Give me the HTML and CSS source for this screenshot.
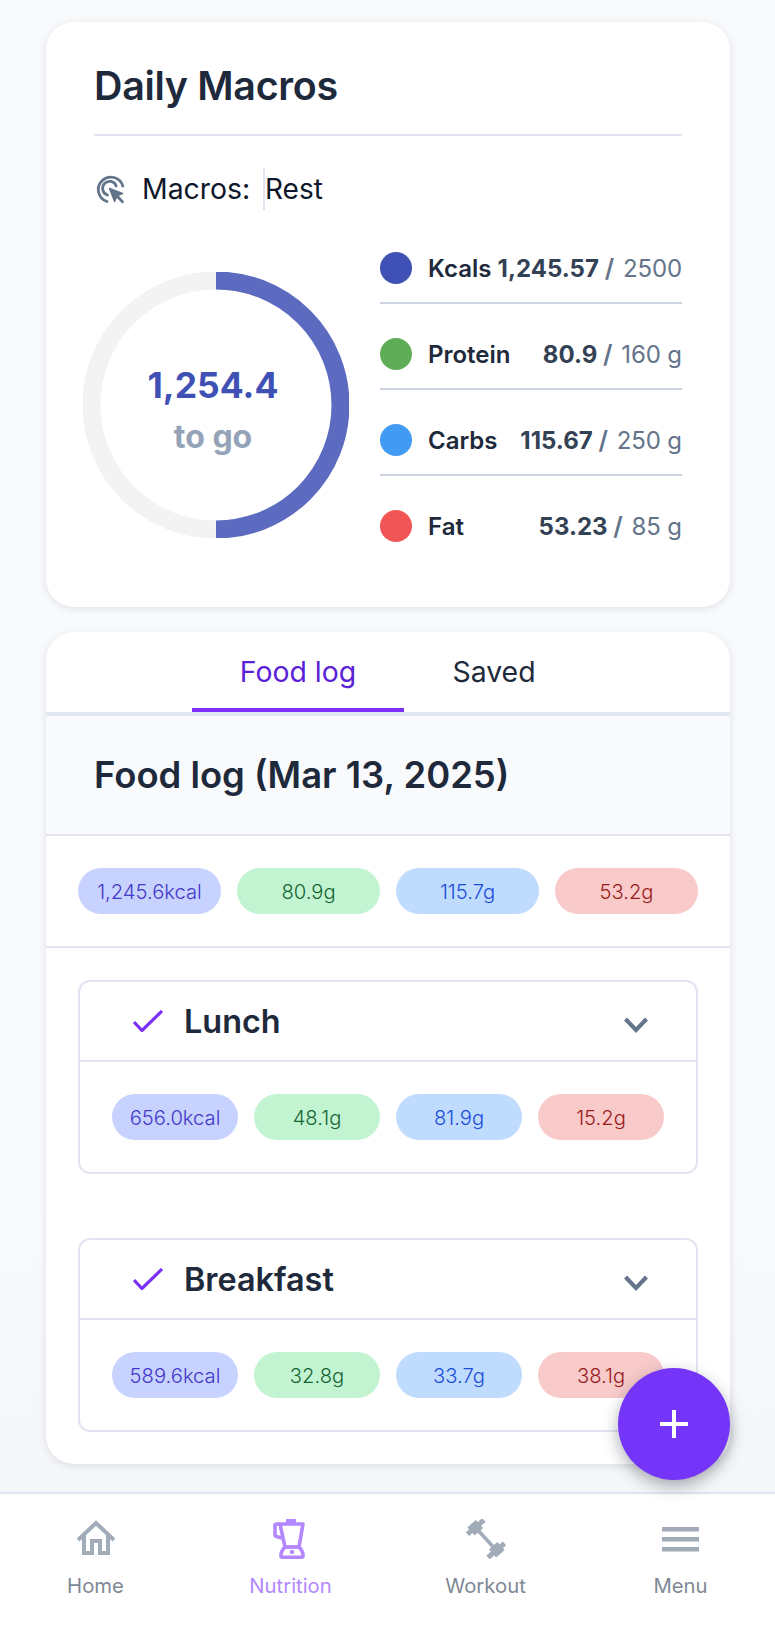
FILE: index.html
```html
<!DOCTYPE html>
<html lang="en">
<head>
<meta charset="utf-8">
<title>Daily Macros</title>
<link rel="stylesheet" href="styles.css">
</head>
<body>
<div class="page">
  <main class="content">
    <section class="card macros-card">
      <h1 class="card-title">Daily Macros</h1>
      <div class="macro-picker">
        <svg class="picker-icon" viewBox="0 0 29 29" fill="none" stroke="#64748b" stroke-width="2.800" stroke-linecap="round" stroke-linejoin="round"><path d="M11 26.500A12.500 12.500 0 1 1 26.800 11"/><path d="M11.500 20A7 7 0 1 1 20.200 11"/><path d="M13.500 13.500l13 5-5.600 2.200-2.200 5.800z" fill="#64748b" stroke-width="1.500"/><path d="M21 21l5.500 5.800"/></svg>
        <span class="picker-label">Macros:</span>
        <span class="picker-value">Rest</span>
      </div>
      <div class="macro-body">
        <div class="ring">
          <svg viewBox="0 0 266 266" class="ring-svg">
            <circle cx="133" cy="133" r="124.500" fill="none" stroke="#f3f3f3" stroke-width="18"/>
            <path d="M133 8.500A124.500 124.500 0 0 1 133 257.500" fill="none" stroke="#5c6bc0" stroke-width="18"/>
          </svg>
          <div class="ring-text">
            <div class="ring-value">1,254.4</div>
            <div class="ring-sub">to go</div>
          </div>
        </div>
        <ul class="legend">
          <li class="legend-row"><span class="dot dot-kcal"></span><span class="legend-name">Kcals</span><span class="legend-nums"><b>1,245.57</b> <i>/</i> <em>2500</em></span></li>
          <li class="legend-row"><span class="dot dot-protein"></span><span class="legend-name">Protein</span><span class="legend-nums"><b>80.9</b> <i>/</i> <em>160 g</em></span></li>
          <li class="legend-row"><span class="dot dot-carbs"></span><span class="legend-name">Carbs</span><span class="legend-nums"><b>115.67</b> <i>/</i> <em>250 g</em></span></li>
          <li class="legend-row"><span class="dot dot-fat"></span><span class="legend-name">Fat</span><span class="legend-nums"><b>53.23</b> <i>/</i> <em>85 g</em></span></li>
        </ul>
      </div>
    </section>

    <section class="card log-card">
      <nav class="tabs">
        <a class="tab tab-active">Food log</a>
        <a class="tab tab-saved">Saved</a>
      </nav>
      <header class="log-header"><h2 class="log-title">Food log (Mar 13, 2025)</h2></header>
      <div class="totals">
        <span class="pill pill-kcal">1,245.6kcal</span>
        <span class="pill pill-protein">80.9g</span>
        <span class="pill pill-carbs">115.7g</span>
        <span class="pill pill-fat">53.2g</span>
      </div>
      <div class="meals">
        <article class="meal">
          <div class="meal-head">
            <svg class="check" viewBox="0 0 30 22" fill="none" stroke="#7b2ff7" stroke-width="3.200"><path d="M1 12l8 8.500L29 1"/></svg>
            <span class="meal-name">Lunch</span>
            <svg class="chevron" viewBox="0 0 24 16" fill="none" stroke="#64748b" stroke-width="4"><path d="M1.500 2l10.500 11 10.500-11"/></svg>
          </div>
          <div class="meal-pills">
            <span class="pill pill-kcal">656.0kcal</span>
            <span class="pill pill-protein">48.1g</span>
            <span class="pill pill-carbs">81.9g</span>
            <span class="pill pill-fat">15.2g</span>
          </div>
        </article>
        <article class="meal">
          <div class="meal-head">
            <svg class="check" viewBox="0 0 30 22" fill="none" stroke="#7b2ff7" stroke-width="3.200"><path d="M1 12l8 8.500L29 1"/></svg>
            <span class="meal-name">Breakfast</span>
            <svg class="chevron" viewBox="0 0 24 16" fill="none" stroke="#64748b" stroke-width="4"><path d="M1.500 2l10.500 11 10.500-11"/></svg>
          </div>
          <div class="meal-pills">
            <span class="pill pill-kcal">589.6kcal</span>
            <span class="pill pill-protein">32.8g</span>
            <span class="pill pill-carbs">33.7g</span>
            <span class="pill pill-fat">38.1g</span>
          </div>
        </article>
      </div>
    </section>
  </main>

  <button class="fab" type="button"><svg viewBox="0 0 30 30" class="fab-plus" fill="none" stroke="#fff" stroke-width="4"><path d="M15 1v28M1 15h28"/></svg></button>

  <nav class="bottom-nav">
    <a class="nav-item">
      <svg class="nav-icon" viewBox="0 0 40 40" fill="none" stroke="#a2acb9" stroke-width="4"><path d="M2 21L20 4l18 17"/><path d="M8 16V34h8V22h8V34h8V16"/></svg>
      <span>Home</span>
    </a>
    <a class="nav-item nav-active">
      <svg class="nav-icon" viewBox="0 0 40 40" fill="none" stroke="#b388ff" stroke-width="3.600" stroke-linejoin="round"><path d="M9 5H32L28 28H14Z"/><path d="M9 5H5.500a1.500 1.500 0 0 0-1.500 1.500v9a2 2 0 0 0 1.500 2l5 1.500"/><rect x="15" y="0" width="10" height="4" fill="#b388ff" stroke="none"/><path d="M14 28H28Q32 32 32 36V37Q32 38.200 30.500 38.200H11.500Q10 38.200 10 37V36Q10 32 14 28Z"/><circle cx="21" cy="33" r="2.200" fill="#b388ff" stroke="none"/></svg>
      <span>Nutrition</span>
    </a>
    <a class="nav-item">
      <svg class="nav-icon" viewBox="0 0 40 40" fill="none" stroke="#a2acb9"><path d="M9 8L31 32" stroke-width="3.600"/><path d="M1.500 15L18 1" stroke-width="5"/><path d="M5 12.500L13.500 5" stroke-width="11"/><path d="M22 38.500L38.500 24.500" stroke-width="5"/><path d="M26.500 34.500L35 27" stroke-width="11"/></svg>
      <span>Workout</span>
    </a>
    <a class="nav-item">
      <svg class="nav-icon" viewBox="0 0 40 40" fill="#a2acb9"><rect x="1" y="8" width="37" height="4.500"/><rect x="1" y="18" width="37" height="4.500"/><rect x="1" y="28" width="37" height="4.500"/></svg>
      <span>Menu</span>
    </a>
  </nav>
</div>
</body>
</html>
```
FILE: styles.css
```css
* { box-sizing: border-box; }
html, body { margin: 0; padding: 0; }
body { font-family: "Inter", "Liberation Sans", sans-serif; color: #1e293b; background: #f8fafc; }
.page { position: relative; width: 775px; height: 1638px; display: flex; flex-direction: column; overflow: hidden; background: #f8fafc; }
.content { flex: 1; padding: 22px 45px 0 46px; display: flex; flex-direction: column; gap: 25px; background: linear-gradient(#f8fafc 80%, #f5f6f8); }
.card { background: #fff; border-radius: 28px; box-shadow: 0 2px 8px rgba(15, 23, 42, .1); }

.macros-card { height: 585px; padding: 0 48px 0 34px; }
.card-title { margin: 0 0 0 14px; height: 114px; border-bottom: 2px solid #e2e5f1; font-size: 39.400px; font-weight: 600; line-height: 40px; padding-top: 44px; letter-spacing: -.3px; color: #1e293b; }
.macro-picker { margin: 32px 0 0 14px; height: 42px; display: flex; align-items: center; }
.picker-icon { width: 29px; height: 29px; flex: none; margin-left: 2px; }
.picker-label { margin-left: 17px; font-size: 28.400px; color: #0f172a; width: 121px; padding-bottom: 2px; }
.picker-value { border-left: 2px solid #e2e5f1; height: 42px; line-height: 42px; font-size: 28px; color: #0f172a; }
.macro-body { display: flex; margin-top: 8px; }
.ring { position: relative; width: 266px; height: 266px; margin: 54px 31px 0 3px; flex: none; }
.ring-svg { width: 266px; height: 266px; display: block; }
.ring-text { position: absolute; inset: 0; display: flex; flex-direction: column; align-items: center; justify-content: center; padding: 12px 6px 0 0; }
.ring-value { font-size: 35.500px; font-weight: 700; line-height: 44px; color: #3f51b5; }
.ring-sub { font-size: 32px; font-weight: 700; line-height: 44px; margin-top: 7px; color: #94a3b8; }
.legend { list-style: none; margin: 0; padding: 0; flex: 1; }
.legend-row { height: 86px; display: flex; align-items: center; padding-top: 16px; border-bottom: 2px solid #cbd5e1; font-size: 24px; }
.legend-row:last-child { border-bottom: 0; padding-bottom: 2px; }
.dot { width: 32px; height: 32px; border-radius: 50%; flex: none; margin-right: 16px; }
.dot-kcal { background: #3f51b5; }
.dot-protein { background: #5fad56; }
.dot-carbs { background: #429bf3; }
.dot-fat { background: #f25555; }
.legend-name { font-weight: 600; color: #1e293b; }
.legend-nums { margin-left: auto; white-space: nowrap; }
.legend-nums b { font-weight: 700; color: #334155; }
.legend-nums i { font-style: normal; font-weight: 600; font-size: 25px; color: #64748b; margin: 0 2px 0 -1px; }
.legend-nums em { font-style: normal; color: #64748b; letter-spacing: -.1px; }

.log-card { height: 832px; overflow: hidden; }
.tabs { height: 84px; display: flex; justify-content: center; border-bottom: 4px solid #e2e8f0; }
.tab { width: 212px; height: 80px; font-size: 28.400px; line-height: 80px; text-align: center; color: #1e293b; }
.tab-active { color: #5b21d6; border-bottom: 4px solid #7b2ff7; }
.tab-saved { width: 180px; }
.log-header { height: 120px; background: #f8fafc; border-bottom: 2px solid #e2e5f1; padding-left: 48px; }
.log-title { margin: 0; font-size: 36.400px; font-weight: 600; line-height: 118px; color: #1e293b; }
.totals { height: 112px; padding: 32px 32px; display: flex; gap: 16px; border-bottom: 2px solid #e2e5f1; }
.pill { flex: 1 1 0; height: 46px; border-radius: 23px; display: flex; align-items: center; justify-content: center; font-size: 20.200px; font-weight: 300; }
.pill-kcal { background: #c7d2fe; color: #4338ca; }
.pill-protein { background: #c3f4d2; color: #166534; }
.pill-carbs { background: #bfdbfe; color: #1d4ed8; }
.pill-fat { background: #f8caca; color: #991b1b; }
.meals { padding: 32px 32px 0; display: flex; flex-direction: column; gap: 64px; }
.meal { border: 2px solid #e2e5f1; border-radius: 12px; height: 194px; }
.meal-head { height: 80px; border-bottom: 2px solid #e2e5f1; display: flex; align-items: center; padding: 0 48px 0 53px; }
.check { width: 30px; height: 22px; flex: none; }
.meal-name { margin-left: 21px; font-size: 32.400px; font-weight: 600; color: #1e293b; }
.chevron { margin-left: auto; margin-top: 7px; width: 24px; height: 16px; flex: none; }
.meal-pills { display: flex; gap: 16px; padding: 32px 32px 0; }

.fab { position: absolute; left: 618px; top: 1368px; width: 112px; height: 112px; border: 0; padding: 0; border-radius: 50%; background: #7535f8; box-shadow: 0 6px 16px rgba(15, 23, 42, .35); display: flex; align-items: center; justify-content: center; }
.fab-plus { width: 30px; height: 30px; }

.bottom-nav { height: 146px; flex: none; margin: 0 -3px 0 -2px; background: #fff; border-top: 2px solid #e2e5f1; display: grid; grid-template-columns: repeat(4, 1fr); padding-top: 25px; }
.nav-item { display: flex; flex-direction: column; align-items: center; font-size: 20.300px; color: #808896; }
.nav-icon { width: 40px; height: 40px; display: block; }
.nav-item span { margin-top: 15px; line-height: 24px; }
.nav-active { color: #b388ff; }
```
